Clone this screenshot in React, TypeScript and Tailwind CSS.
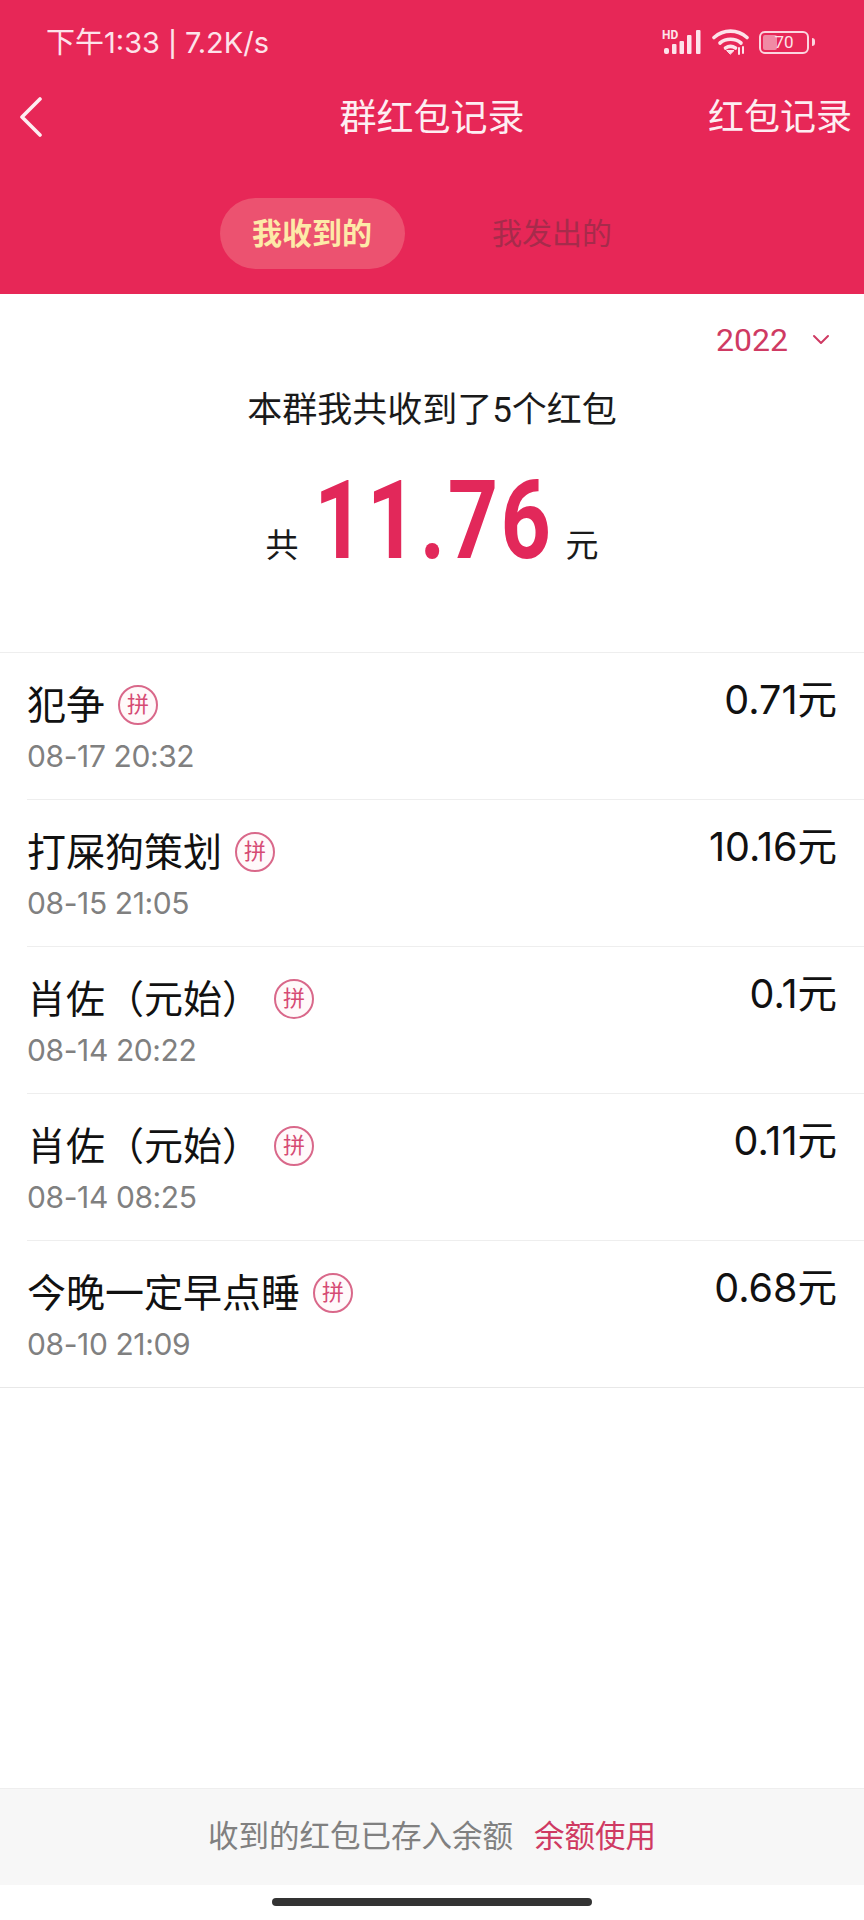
import React from 'react';

const FONT = "font-['Roboto','Noto_Sans_CJK_SC',sans-serif]";
const NUM_FONT = "font-['Inter','Noto_Sans_CJK_SC',sans-serif]";

const rows = [
  { name: '犯争', time: '08-17 20:32', amount: '0.71元' },
  { name: '打屎狗策划', time: '08-15 21:05', amount: '10.16元' },
  { name: '肖佐（元始）', time: '08-14 20:22', amount: '0.1元' },
  { name: '肖佐（元始）', time: '08-14 08:25', amount: '0.11元' },
  { name: '今晚一定早点睡', time: '08-10 21:09', amount: '0.68元' },
];

const StatusIcons = () => (
  <div className="flex items-center">
    {/* signal */}
    <svg width="40" height="26" viewBox="0 0 40 26" fill="#fde3ea">
      <text x="0" y="10" fontSize="12" fontWeight="700" fontFamily="Roboto">HD</text>
      <rect x="2" y="19" width="5" height="6" rx="2" />
      <rect x="10" y="15" width="4.5" height="10" rx="1" />
      <rect x="17.5" y="12" width="4.5" height="13" rx="1" />
      <rect x="25" y="6" width="4.5" height="19" rx="1" />
      <rect x="34" y="1" width="4.5" height="24" rx="1" />
    </svg>
    {/* wifi */}
    <svg width="37" height="26" viewBox="0 0 37 26" fill="none" stroke="#fde3ea" strokeWidth="3.6" strokeLinecap="round" className="ml-[10px]">
      <path d="M2 8.5c9.5-8.5 23.5-8.5 33 0" />
      <path d="M8 14c6-5 15-5 21 0" />
      <path d="M13.5 19c3-2 7-2 10 0" />
      <path d="M15 21.5h7l-3.5 3.5z" fill="#fde3ea" strokeWidth="1" />
      <path d="M27 25v-6M31 18v6" strokeWidth="2" />
    </svg>
    {/* battery */}
    <div className="flex items-center ml-[10px]">
      <div className="relative w-[50px] h-[23px] rounded-[6px] border-2 border-[#fbd5df] flex items-center justify-center overflow-hidden">
        <div className="absolute left-[2px] top-[2px] bottom-[2px] w-[14px] rounded-[2px] bg-[#f08aa5]" />
        <span className="relative text-[17px] leading-none text-[#fde3ea]">70</span>
      </div>
      <div className="w-[3px] h-[8px] bg-[#fbd5df] ml-[3px] rounded-r-sm" />
    </div>
  </div>
);

const PinBadge = () => (
  <div className="w-[40px] h-[40px] rounded-full border-2 border-[#d9688a] bg-[#fff9fa] flex items-center justify-center shrink-0 -translate-y-[1px]">
    <span className="text-[22px] leading-none text-[#d64a74]">拼</span>
  </div>
);

export default function App() {
  return (
    <div className={`w-[864px] h-[1920px] bg-white flex flex-col ${FONT}`}>
      {/* Header */}
      <div className="bg-[#e72757] h-[294px] shrink-0 flex flex-col">
        <div className="h-[84px] pl-[46px] pr-[49px] flex items-center justify-between">
          <span className={`text-[29px] leading-none text-[#fde3ea] ${NUM_FONT}`}>
            下午1:33 <span className="text-[25px] font-medium">|</span> 7.2K/s
          </span>
          <StatusIcons />
        </div>
        <div className="h-[66px] grid grid-cols-[1fr_auto_1fr] items-center px-[12px] text-[#fdeef2]">
          <svg width="24" height="40" viewBox="0 0 24 40" fill="none" stroke="currentColor" strokeWidth="3.6" strokeLinecap="round" strokeLinejoin="round" className="ml-[7px]">
            <path d="M21 2 3 20l18 18" />
          </svg>
          <span className="text-[37px] leading-none translate-y-[1px]">群红包记录</span>
          <span className="text-[36px] leading-none justify-self-end translate-y-[1px]">红包记录</span>
        </div>
        <div className="flex items-center justify-center mt-[48px] gap-[55px]">
          <div className="w-[185px] h-[71px] rounded-full bg-[#ec5270] flex items-center justify-center text-[30px] font-bold text-[#fdeaa8]">我收到的</div>
          <div className="w-[185px] h-[71px] flex items-center justify-center text-[30px] text-[#a62b4b]">我发出的</div>
        </div>
      </div>

      {/* Summary */}
      <div className="h-[359px] shrink-0 border-b border-[#eeeeee] flex flex-col">
        <div className="flex items-center justify-end pt-[26px] pr-[34px] gap-[24px] text-[#cf3a63]">
          <span className="text-[32px] leading-[40px]">2022</span>
          <svg width="18" height="12" viewBox="0 0 18 12" fill="none" stroke="currentColor" strokeWidth="2" strokeLinecap="round" strokeLinejoin="round">
            <path d="M2 2l7 7 7-7" />
          </svg>
        </div>
        <div className="text-center text-[35px] leading-[44px] mt-[29px] text-[#1a1a1a]">本群我共收到了5个红包</div>
        <div className="flex items-end justify-center mt-[36px] text-[#1a1a1a]">
          <span className="text-[33px] leading-[40px] mb-[7px]">共</span>
          <div className="w-[227px] ml-[22px] mr-[18px] flex justify-center whitespace-nowrap">
            <span className="block text-[110px] leading-[104px] font-bold text-[#e2285a] scale-x-[0.8] tracking-[3px]">11.76</span>
          </div>
          <span className="text-[33px] leading-[40px] mb-[7px]">元</span>
        </div>
      </div>

      {/* List */}
      <div className="flex flex-col">
        {rows.map((row, i) => (
          <div key={i} className="flex flex-col">
            <div className="h-[146px] pl-[27px] pr-[27px] flex justify-between">
              <div className="flex flex-col pt-[30px]">
                <div className="flex items-center gap-[13px]">
                  <span className="text-[39px] leading-[46px] text-[#111]">{row.name}</span>
                  <PinBadge />
                </div>
                <span className={`text-[30px] leading-[38px] mt-[8px] tracking-[-0.4px] text-[#808080] ${NUM_FONT}`}>{row.time}</span>
              </div>
              <span className={`text-[39.5px] leading-[46px] pt-[24px] box-content text-[#111] ${NUM_FONT}`}>{row.amount}</span>
            </div>
            <div className={i === rows.length - 1 ? 'h-px bg-[#e8e8e8]' : 'h-px bg-[#eeeeee] ml-[27px]'} />
          </div>
        ))}
      </div>

      <div className="flex-1" />

      {/* Footer */}
      <div className="h-[97px] bg-[#f7f7f7] border-t border-[#eeeeee] flex items-center justify-center gap-[21px] text-[30.5px] shrink-0">
        <span className="text-[#808080]">收到的红包已存入余额</span>
        <span className="text-[#cf3a63]">余额使用</span>
      </div>
      <div className="h-[35px] flex items-start justify-center pt-[13px] shrink-0">
        <div className="w-[320px] h-[8px] rounded-full bg-[#333]" />
      </div>
    </div>
  );
}
